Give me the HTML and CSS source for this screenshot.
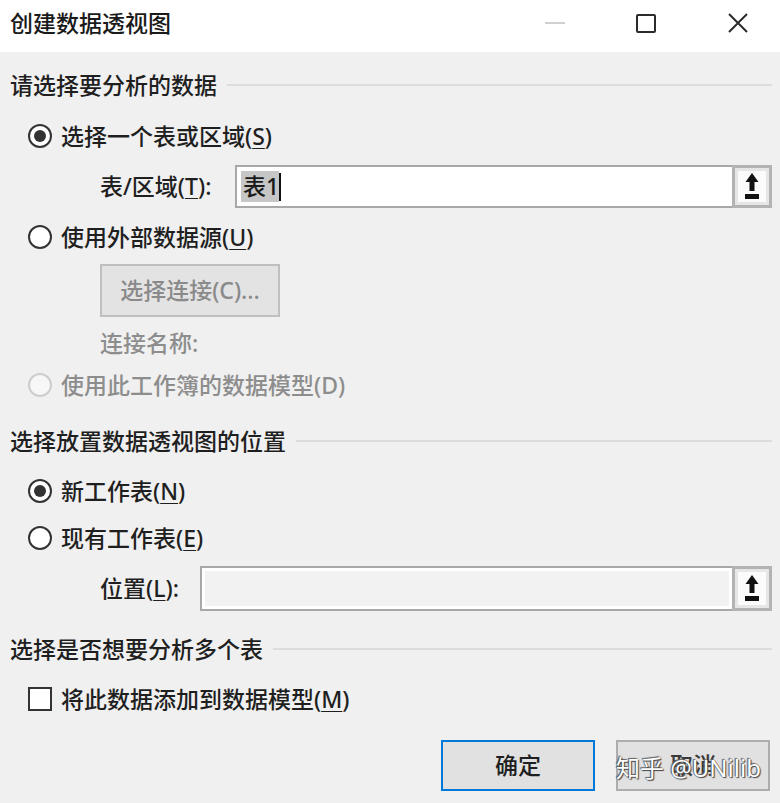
FILE: index.html
```html
<!DOCTYPE html>
<html lang="zh-CN">
<head>
<meta charset="utf-8">
<title>创建数据透视图</title>
<link rel="stylesheet" href="styles.css">
</head>
<body>
<div class="window">
  <header class="titlebar">
    <span class="title">创建数据透视图</span>
    <div class="controls">
      <span class="ctl ctl-min"></span>
      <span class="ctl ctl-max"></span>
      <svg class="ctl ctl-close" viewBox="0 0 20 20" width="20" height="20"><path d="M1 1 L19 19 M19 1 L1 19" stroke="#2b2b2b" stroke-width="2" fill="none"/></svg>
    </div>
  </header>

  <main class="content">
    <div class="section sec-1"><span class="section-text">请选择要分析的数据</span><span class="rule"></span></div>

    <div class="option opt-1"><span class="radio checked"></span><span>选择一个表或区域(<u>S</u>)</span></div>

    <div class="field field-table">
      <span class="field-label">表/区域(<u>T</u>):</span>
      <div class="input input-white"><span class="selected">表1</span><span class="caret"></span></div>
      <span class="collapse">
        <svg viewBox="0 0 16 27" width="16" height="27"><path d="M8 0 L14.5 9 L10.5 9 L10.5 18 L5.5 18 L5.5 9 L1.5 9 Z" fill="#111"/><rect x="1" y="21" width="14" height="5" fill="#111"/></svg>
      </span>
    </div>

    <div class="option opt-2"><span class="radio"></span><span>使用外部数据源(<u>U</u>)</span></div>

    <div class="btn-row"><span class="btn btn-disabled">选择连接(C)...</span></div>

    <div class="note">连接名称:</div>

    <div class="option opt-3 disabled"><span class="radio"></span><span>使用此工作簿的数据模型(D)</span></div>

    <div class="section sec-2"><span class="section-text">选择放置数据透视图的位置</span><span class="rule"></span></div>

    <div class="option opt-4"><span class="radio checked"></span><span>新工作表(<u>N</u>)</span></div>

    <div class="option opt-5"><span class="radio"></span><span>现有工作表(<u>E</u>)</span></div>

    <div class="field field-place">
      <span class="field-label">位置(<u>L</u>):</span>
      <div class="input input-grey"></div>
      <span class="collapse">
        <svg viewBox="0 0 16 27" width="16" height="27"><path d="M8 0 L14.5 9 L10.5 9 L10.5 18 L5.5 18 L5.5 9 L1.5 9 Z" fill="#111"/><rect x="1" y="21" width="14" height="5" fill="#111"/></svg>
      </span>
    </div>

    <div class="section sec-3"><span class="section-text">选择是否想要分析多个表</span><span class="rule"></span></div>

    <div class="option opt-6"><span class="checkbox"></span><span>将此数据添加到数据模型(<u>M</u>)</span></div>

    <div class="actions">
      <span class="btn btn-default">确定</span>
      <span class="btn btn-cancel">取消<span class="watermark">知乎 @UNilib</span></span>
    </div>
  </main>
</div>
</body>
</html>
```

FILE: styles.css
```css
html, body {
  margin: 0;
  padding: 0;
  background: #f0f0f0;
}

body {
  font-family: "Noto Sans", "Noto Sans CJK SC", sans-serif;
  font-size: 23px;
  font-weight: 500;
  color: #1f1f1f;
  line-height: 1;
}

.window {
  width: 780px;
  height: 803px;
  overflow: hidden;
}

u {
  text-decoration-thickness: 1px;
  text-underline-offset: 3px;
}

/* title bar */
.titlebar {
  height: 52px;
  background: #ffffff;
  display: flex;
  align-items: center;
  justify-content: space-between;
  padding-left: 10px;
  box-sizing: border-box;
}

.title {
  font-size: 23px;
  color: #1a1a1a;
  margin-top: -6px;
}

.controls {
  display: flex;
  align-items: center;
  padding-right: 32px;
  margin-top: -6px;
}

.ctl {
  display: block;
  width: 20px;
  height: 20px;
  box-sizing: border-box;
}

.ctl-min {
  height: 2px;
  background: #d0d0d0;
  margin-right: 71px;
}

.ctl-max {
  width: 20px;
  height: 19px;
  border: 2px solid #2b2b2b;
  border-radius: 2px;
  margin-right: 72px;
}

/* content */
.content {
  display: flex;
  flex-direction: column;
  padding: 0 8px 0 10px;
}

.section {
  height: 30px;
  display: flex;
  align-items: center;
}

.section-text {
  white-space: nowrap;
}

.rule {
  flex: 1;
  height: 2px;
  background: #dcdcdc;
  margin-left: 10px;
}

.sec-1 { margin-top: 18px; }
.sec-2 { margin-top: 26px; }
.sec-3 { margin-top: 23px; }

.option {
  height: 30px;
  display: flex;
  align-items: center;
  padding-left: 18px;
  white-space: nowrap;
}

.opt-1 { margin-top: 21px; }
.opt-2 { margin-top: 14px; }
.opt-3 { margin-top: 12px; }
.opt-4 { margin-top: 20px; }
.opt-5 { margin-top: 17px; }
.opt-6 { margin-top: 20px; }

.option.disabled {
  color: #8d8d8d;
}

.radio {
  width: 24px;
  height: 24px;
  box-sizing: border-box;
  border: 2px solid #333333;
  border-radius: 50%;
  background: #ffffff;
  margin-right: 9px;
  display: flex;
  align-items: center;
  justify-content: center;
  flex: none;
}

.radio.checked::after {
  content: "";
  width: 12px;
  height: 12px;
  border-radius: 50%;
  background: #333333;
}

.disabled .radio {
  border-color: #cdcdcd;
  background: #f7f7f7;
}

.checkbox {
  width: 24px;
  height: 24px;
  box-sizing: border-box;
  border: 2px solid #333333;
  background: #ffffff;
  margin-right: 9px;
  flex: none;
}

/* reference fields */
.field {
  display: flex;
  align-items: center;
  padding-left: 90px;
}

.field-table {
  margin-top: 14px;
  height: 43px;
}

.field-place {
  margin-top: 13px;
  height: 45px;
}

.field-label {
  white-space: nowrap;
}

.field-table .field-label { width: 135px; }
.field-place .field-label { width: 100px; }

.input {
  flex: 1;
  height: 100%;
  box-sizing: border-box;
  border: 2px solid #a8a8a8;
  border-right: none;
  display: flex;
  align-items: center;
  padding-left: 4px;
}

.input-white {
  background: #ffffff;
}

.input-grey {
  background: #f2f2f2;
  box-shadow: inset 0 0 0 3px #ffffff;
}

.selected {
  background: #c6c6c6;
  padding: 4px 0 4px 2px;
  color: #1a1a1a;
}

.caret {
  width: 2px;
  height: 28px;
  background: #111111;
}

.collapse {
  width: 40px;
  height: 100%;
  box-sizing: border-box;
  border: 3px solid #b3b3b3;
  box-shadow: inset 0 0 0 3px #e6e6e6;
  background: #fbfbfb;
  display: flex;
  align-items: center;
  justify-content: center;
  flex: none;
}

/* buttons */
.btn-row {
  margin-top: 12px;
  padding-left: 90px;
  display: flex;
}

.btn {
  display: flex;
  align-items: center;
  justify-content: center;
  box-sizing: border-box;
  background: #e1e1e1;
  border: 2px solid #adadad;
  white-space: nowrap;
}

.btn-disabled {
  width: 180px;
  height: 53px;
  color: #8a8a8a;
  border-color: #bfbfbf;
  background: #e3e3e3;
}

.note {
  margin-top: 11px;
  height: 30px;
  display: flex;
  align-items: center;
  padding-left: 90px;
  color: #8d8d8d;
}

.actions {
  margin-top: 26px;
  display: flex;
  justify-content: flex-end;
  gap: 21px;
  padding-right: 2px;
}

.actions .btn {
  width: 154px;
  height: 51px;
}

.btn-default {
  border-color: #0078d7;
}

.btn-cancel {
  position: relative;
  color: #3a3a3a;
}

.watermark {
  position: absolute;
  left: -2px;
  top: 14px;
  font-size: 24px;
  font-weight: 400;
  color: #ffffff;
  white-space: nowrap;
  text-shadow: 0 0 1px #333, 1px 1px 1px #444, -1px -1px 1px #666;
}
```
